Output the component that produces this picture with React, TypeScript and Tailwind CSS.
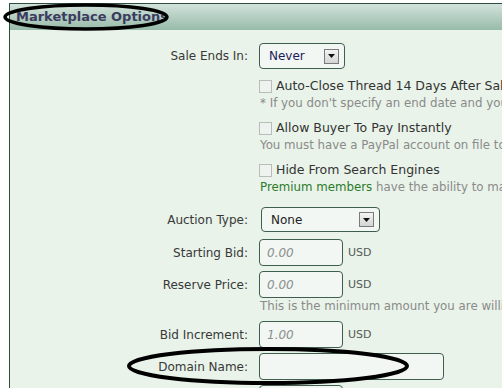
const font = { fontFamily: '"DejaVu Sans", Verdana, sans-serif' };

function Label({ children }: { children: React.ReactNode }) {
  return <div className="w-[249px] shrink-0 pr-[11px] text-right text-[12px] text-[#383838]">{children}</div>;
}

function SelectBox({ value, width, color }: { value: string; width: string; color: string }) {
  return (
    <div
      className={`flex h-full ${width} items-center justify-between rounded-[4px] border border-[#3e5f50] bg-[#f2f7f4] pl-[9px] pr-[5px]`}
    >
      <span className={`text-[12px] ${color}`}>{value}</span>
      <span className="flex h-[15px] w-[15px] items-center justify-center border border-[#7a7a7a] bg-gradient-to-b from-[#f4f4f4] to-[#d4d4d4]">
        <svg width="7" height="4" viewBox="0 0 7 4">
          <path d="M0 0h7L3.5 4z" fill="#111" />
        </svg>
      </span>
    </div>
  );
}

function MoneyInput({ placeholder }: { placeholder: string }) {
  return (
    <div className="flex h-full items-center gap-[5px]">
      <div className="flex h-full w-[84px] items-center rounded-[4px] border border-[#3e5f50] bg-[#f2f7f4] pl-[7px]">
        <span className="text-[12px] italic text-[#8a8f8c]">{placeholder}</span>
      </div>
      <span className="pt-[2px] text-[11px] text-[#555b58]">USD</span>
    </div>
  );
}

function CheckGroup({ label, help }: { label: string; help: React.ReactNode }) {
  return (
    <div className="pl-[249px]">
      <div className="flex h-[17px] items-center gap-[4px] whitespace-nowrap">
        <span className="h-[13px] w-[13px] shrink-0 border border-[#b7bdb8] bg-[#eef3ef]" />
        <span className="text-[12.5px] text-[#333]">{label}</span>
      </div>
      <div className="flex h-[17px] items-center whitespace-nowrap pl-[1px] text-[11.8px] text-[#8a8a8a]">{help}</div>
    </div>
  );
}

export default function App() {
  return (
    <div className="relative h-[388px] w-[502px] overflow-hidden bg-white" style={font}>
      <div className="ml-[9px] mt-[3px] h-[400px] border-l border-t border-[#2e4f40] bg-[#e9f3e9]">
        <div className="flex h-[26px] items-center bg-gradient-to-b from-[#d2e2db] to-[#98bba9] pl-[6px]">
          <span className="text-[13px] font-bold text-[#3b3c60]">Marketplace Options</span>
        </div>

        <div className="mt-[13px] flex h-[26px] items-center">
          <Label>Sale Ends In:</Label>
          <SelectBox value="Never" width="w-[86px]" color="text-[#1c1c5c]" />
        </div>

        <div className="mt-[9px] flex flex-col gap-[8px]">
          <CheckGroup
            label="Auto-Close Thread 14 Days After Sale"
            help="* If you don't specify an end date and you get no bids"
          />
          <CheckGroup label="Allow Buyer To Pay Instantly" help="You must have a PayPal account on file to enable this" />
          <CheckGroup
            label="Hide From Search Engines"
            help={
              <>
                <span className="text-[#2b7a2b]">Premium members</span>&nbsp;have the ability to make their
              </>
            }
          />
        </div>

        <div className="mt-[11px] flex h-[25px] items-center">
          <Label>Auction Type:</Label>
          <div className="ml-[2px] h-full">
            <SelectBox value="None" width="w-[119px]" color="text-[#222]" />
          </div>
        </div>

        <div className="mt-[7px] flex h-[27px] items-center">
          <Label>Starting Bid:</Label>
          <MoneyInput placeholder="0.00" />
        </div>

        <div className="mt-[5px] flex h-[27px] items-center">
          <Label>Reserve Price:</Label>
          <MoneyInput placeholder="0.00" />
        </div>
        <div className="flex h-[18px] items-center whitespace-nowrap pl-[250px] text-[11.8px] text-[#8a8a8a]">
          This is the minimum amount you are willing to accept
        </div>

        <div className="mt-[5px] flex h-[27px] items-center">
          <Label>Bid Increment:</Label>
          <MoneyInput placeholder="1.00" />
        </div>

        <div className="mt-[5px] flex h-[27px] items-center">
          <Label>Domain Name:</Label>
          <div className="h-full w-[185px] rounded-[4px] border border-[#3e5f50] bg-[#f2f7f4]" />
        </div>

        <div className="mt-[5px] flex h-[27px] items-center">
          <Label>&nbsp;</Label>
          <div className="h-full w-[84px] rounded-[4px] border border-[#3e5f50] bg-[#f2f7f4]" />
        </div>
      </div>

      <svg className="pointer-events-none absolute left-0 top-0" width="502" height="388">
        <ellipse cx="86" cy="17" rx="81" ry="12" fill="none" stroke="#000" strokeWidth="3.5" />
        <ellipse cx="268" cy="366" rx="139" ry="17" fill="none" stroke="#000" strokeWidth="4" />
      </svg>
    </div>
  );
}
